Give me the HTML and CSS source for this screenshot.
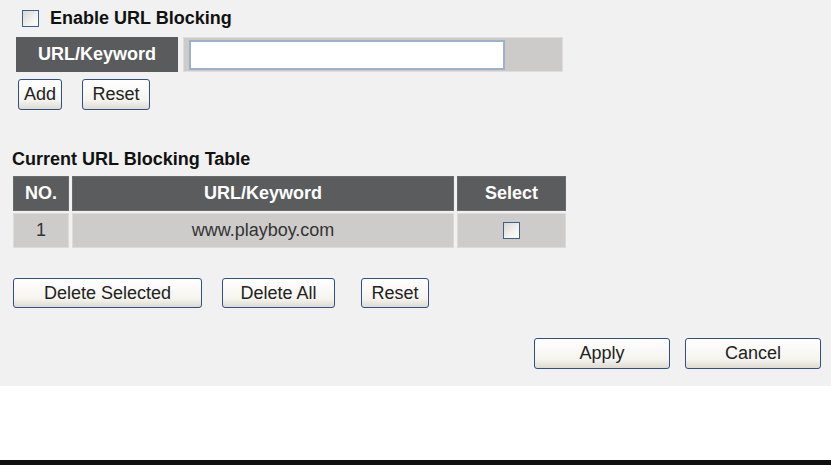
FILE: index.html
```html
<!DOCTYPE html>
<html lang="en">
<head>
<meta charset="UTF-8">
<meta name="viewport" content="width=device-width, initial-scale=1.0">
<title>URL Blocking</title>
<link rel="stylesheet" href="styles.css">
</head>
<body>
<div class="panel">
    <div class="enable-row">
        <input type="checkbox" class="check" id="enableBlocking">
        <label for="enableBlocking">Enable URL Blocking</label>
    </div>

    <div class="url-row">
        <div class="url-label">URL/Keyword</div>
        <div class="url-cell"><input type="text" class="url-input"></div>
    </div>

    <div class="btn-row top-btns">
        <button class="btn btn-add">Add</button>
        <button class="btn btn-reset">Reset</button>
    </div>

    <h3 class="table-title">Current URL Blocking Table</h3>
    <div class="block-table">
        <div class="head">NO.</div>
        <div class="head">URL/Keyword</div>
        <div class="head">Select</div>
        <div class="cell">1</div>
        <div class="cell">www.playboy.com</div>
        <div class="cell"><input type="checkbox" class="check"></div>
    </div>

    <div class="btn-row table-btns">
        <button class="btn btn-del-sel">Delete Selected</button>
        <button class="btn btn-del-all">Delete All</button>
        <button class="btn btn-reset2">Reset</button>
    </div>

    <div class="btn-row apply-row">
        <button class="btn btn-wide">Apply</button>
        <button class="btn btn-wide">Cancel</button>
    </div>
</div>
<div class="blank"></div>
<div class="black-bar"></div>
</body>
</html>
```

FILE: styles.css
```css
body {
    margin: 0;
    padding: 0;
    background-color: #fff;
    font-family: "Liberation Sans", Arial, sans-serif;
    font-size: 18px;
    color: #222;
}
.panel {
    height: 386px;
    background-color: #f0f1f0;
    overflow: hidden;
}
.check {
    appearance: none;
    -webkit-appearance: none;
    margin: 0;
    width: 17px;
    height: 17px;
    box-sizing: border-box;
    border: 1px solid #3e5e8e;
    background: linear-gradient(135deg, #d8d8d2 0%, #f2f2ee 60%, #ffffff 100%);
}
.enable-row {
    display: flex;
    align-items: center;
    gap: 11px;
    padding: 10px 0 0 22px;
    height: 17px;
}
.enable-row label {
    font-weight: bold;
    color: #111;
}
.url-row {
    display: flex;
    gap: 5px;
    margin: 10px 0 0 16px;
    height: 35px;
}
.url-label {
    width: 162px;
    background-color: #5a5b5d;
    color: #fff;
    font-weight: bold;
    display: flex;
    align-items: center;
    justify-content: center;
}
.url-cell {
    width: 373px;
    background-color: #cdcbc9;
    border: 1px solid #dedddb;
    display: flex;
    align-items: center;
    padding-left: 5px;
}
.url-input {
    width: 316px;
    height: 30px;
    box-sizing: border-box;
    border: 2px solid #9fb0c9;
    background: #fff;
    margin: 0;
}
.btn-row {
    display: flex;
}
.btn {
    height: 31px;
    box-sizing: border-box;
    padding: 0;
    border: 1px solid #2f5089;
    border-radius: 3px;
    background: linear-gradient(#ffffff, #f5f4ef 70%, #dedbd0);
    font-family: "Liberation Sans", Arial, sans-serif;
    font-size: 18px;
    color: #222;
}
.top-btns {
    margin: 7px 0 0 18px;
    gap: 20px;
}
.btn-add { width: 44px; }
.btn-reset { width: 68px; }
.table-title {
    margin: 38px 0 0 12px;
    font-size: 18px;
    line-height: 22px;
    font-weight: bold;
    color: #111;
}
.block-table {
    display: grid;
    grid-template-columns: 56px 382px 109px;
    grid-template-rows: 35px 35px;
    gap: 2px 3px;
    margin: 6px 0 0 13px;
}
.head, .cell {
    display: flex;
    align-items: center;
    justify-content: center;
    box-sizing: border-box;
}
.head {
    background-color: #5b5c5e;
    border: 1px solid #6a6b6d;
    color: #fff;
    font-weight: bold;
}
.cell {
    background-color: #cecccb;
    border: 1px solid #dcdbda;
    color: #333;
}
.table-btns {
    margin: 30px 0 0 13px;
    height: 30px;
}
.table-btns .btn { height: 30px; }
.btn-del-sel { width: 189px; }
.btn-del-all { width: 113px; margin-left: 20px; }
.btn-reset2 { width: 68px; margin-left: 26px; }
.apply-row {
    justify-content: flex-end;
    gap: 15px;
    margin-top: 30px;
    padding-right: 10px;
}
.btn-wide { width: 136px; }
.blank {
    height: 74px;
}
.black-bar {
    height: 5px;
    background-color: #111010;
}
```
